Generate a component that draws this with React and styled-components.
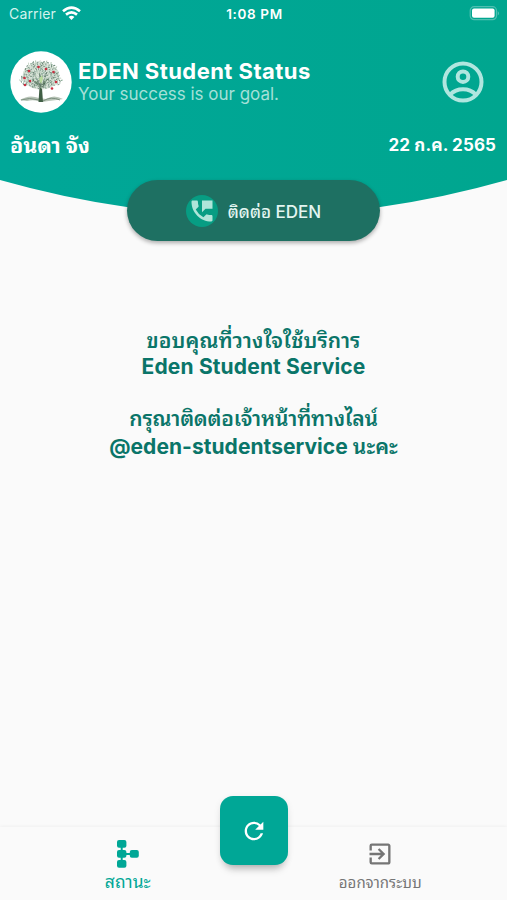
import React from 'react';
import styled, { createGlobalStyle } from 'styled-components';
import { MdPermPhoneMsg, MdRefresh, MdExitToApp } from 'react-icons/md';

const fontStack = 'Inter, "Noto Sans Thai Looped", "Noto Looped Thai", Loma, Waree, Garuda, Umpush, "Noto Sans", sans-serif';

const GlobalStyle = createGlobalStyle`
  * { box-sizing: border-box; }
  body { margin: 0; background: #fafafa; font-family: ${fontStack}; }
  svg { display: block; flex: none; }
`;

const Screen = styled.main`
  display: flex;
  flex-direction: column;
  width: 507px;
  height: 900px;
  overflow: hidden;
  background: #fafafa;
`;

const Header = styled.header`
  height: 216px;
  flex: none;
  color: #fff;
  background: linear-gradient(90deg, #00a798, #00a68f);
  clip-path: path('M0 0H507V180Q253.5 252 0 180Z');
`;

const StatusBar = styled.div`
  display: grid;
  grid-template-columns: 1fr auto 1fr;
  align-items: center;
  height: 27px;
  padding: 0 7px 0 9px;
  font-size: 13px;
  line-height: 16px;
`;

const Carrier = styled.div`
  display: flex;
  align-items: center;
  gap: 6px;
  font-size: 14px;
  letter-spacing: 0.15px;
  color: #d3f3ee;
`;

const Clock = styled.div`
  font-size: 13.5px;
  font-weight: 600;
  letter-spacing: 0.65px;
`;

const BatterySlot = styled.div`
  display: flex;
  justify-content: flex-end;
`;

const BrandRow = styled.div`
  display: flex;
  align-items: center;
  height: 62px;
  margin-top: 23px;
  padding: 1px 23px 0 10px;
  gap: 6px;
`;

const BrandText = styled.div`
  flex: 1;
  padding-top: 1px;
`;

const Title = styled.h1`
  margin: 0;
  font-size: 22px;
  line-height: 23px;
  font-weight: 700;
  letter-spacing: 0.45px;
  white-space: nowrap;
`;

const Tagline = styled.p`
  margin: 0;
  font-size: 17px;
  line-height: 22px;
  letter-spacing: -0.02px;
  color: #a5e0d8;
`;

const InfoRow = styled.div`
  display: flex;
  align-items: center;
  justify-content: space-between;
  height: 40px;
  margin-top: 11px;
  padding: 0 11px 0 10px;
`;

const StudentName = styled.div`
  font-size: 21.5px;
  font-weight: 700;
`;

const DateText = styled.div`
  font-size: 17px;
  font-weight: 700;
  letter-spacing: 0.1px;
`;

const ContactButton = styled.button`
  display: flex;
  align-items: center;
  justify-content: center;
  gap: 10px;
  align-self: center;
  flex: none;
  position: relative;
  width: 253px;
  height: 61px;
  margin: -36px 0 0;
  padding: 0;
  border: 0;
  border-radius: 31px;
  background: #1e7062;
  box-shadow: 0 2px 4px rgba(0, 0, 0, 0.32);
  color: #e3f5f1;
  font: 500 17px/24px ${fontStack};
`;

const ContactLabel = styled.span`
  padding-top: 2px;
`;

const PhoneBadge = styled.span`
  display: grid;
  place-items: center;
  width: 32px;
  height: 32px;
  border-radius: 50%;
  background: #079d83;
  color: #afe5d9;
`;

const Message = styled.section`
  flex: 1;
  padding-top: 87px;
  text-align: center;
  color: #0a7569;
`;

const MessageLine = styled.p`
  margin: 0;
  height: ${(p) => p.$height}px;
  font-size: 21px;
  line-height: 26px;
  font-weight: ${(p) => p.$weight || 600};
  letter-spacing: ${(p) => p.$spacing || 0}px;
  white-space: nowrap;
`;

const BottomBar = styled.nav`
  display: grid;
  grid-template-columns: 1fr 1fr;
  flex: none;
  position: relative;
  height: 73px;
  background: #fafafa;
  box-shadow: 0 -1px 3px rgba(0, 0, 0, 0.045);
`;

const Tab = styled.div`
  display: flex;
  flex-direction: column;
  align-items: center;
  padding: ${(p) => (p.$active ? '13px 0 0 2px' : '13px 0 0')};
  gap: ${(p) => (p.$active ? 2 : 3)}px;
  color: ${(p) => (p.$active ? '#00a796' : '#757575')};
  font-size: ${(p) => (p.$active ? 17.5 : 15)}px;
  line-height: 24px;
`;

const RefreshButton = styled.button`
  position: absolute;
  left: 220px;
  top: -31px;
  display: grid;
  place-items: center;
  width: 68px;
  height: 69px;
  padding: 0;
  border: 0;
  border-radius: 13px;
  background: #00a796;
  color: #fff;
  box-shadow: 0 8px 9px -5px rgba(0, 0, 0, 0.28), 0 2px 7px rgba(0, 0, 0, 0.08);
`;

const leaves = Array.from({ length: 230 }, (_, i) => {
  const a = i * 2.39996;
  const r = Math.sqrt((i + 0.5) / 230);
  const wobble = 1 + 0.09 * Math.sin(a * 5);
  return {
    x: 31 + Math.cos(a) * r * 20 * wobble,
    y: 22.5 + Math.sin(a) * r * 14 * wobble + Math.abs(Math.cos(a) * r) * 4,
    turn: (i * 67) % 180,
    tone: ['#8fae9a', '#6b8776', '#b4c9b6', '#849e90', '#cad8ca'][i % 5],
  };
});

const apples = [
  [28.5, 16], [36, 18], [19, 20], [43.5, 21], [14.5, 27], [20, 30], [15, 34], [46, 31], [42, 37.5],
];

const TreeLogo = () => (
  <svg width="62" height="62" viewBox="0 0 62 62">
    <circle cx="31" cy="31" r="30.7" fill="#fff" />
    <ellipse cx="31" cy="25" rx="18.5" ry="13.5" fill="#d3ded1" opacity=".7" />
    <path d="M10 49q9-6 19-2l7 1q8-5 17 0l-6 1q-9 1-15 2-8-3-15-1z" fill="#b8c4b7" />
    <path d="M11 49q8-3 18 0M33 50q8-5 17-1" stroke="#7d9080" strokeWidth="1" fill="none" />
    <path d="M28.5 51l1-15-8-8 8 4V20l2 13 8-7-7.5 11 1 14z" fill="#405e45" />
    <path d="M31 37L18 30M31 35l-8-14M32 36l13-10M32 34l5-13" stroke="#66796b" strokeWidth=".7" />
    {leaves.map((l, i) => (
      <ellipse key={i} cx={l.x} cy={l.y} rx="1.2" ry=".6" fill={l.tone} transform={`rotate(${l.turn} ${l.x} ${l.y})`} />
    ))}
    <path d="M29 28l3-4 1 4-2 5z" fill="#b9db9c" />
    {apples.map(([x, y], i) => <circle key={i} cx={x} cy={y} r="1.3" fill="#c82e40" />)}
  </svg>
);

const WifiIcon = () => (
  <svg width="19" height="15" viewBox="0 0 19 15" fill="none" stroke="#fff" strokeWidth="2.7">
    <path d="M1 5.2Q9.5-1.8 18 5.2M4 8.6Q9.5 4.2 15 8.6" />
    <path d="M6.6 11Q9.5 8.7 12.4 11L9.5 14z" fill="#fff" stroke="none" />
  </svg>
);

const BatteryIcon = () => (
  <svg width="31" height="15" viewBox="0 0 31 15">
    <rect x="1.2" y=".7" width="26.3" height="13" rx="4" fill="none" stroke="#4fbfb1" strokeWidth="1.2" />
    <rect x="3" y="2.6" width="22.6" height="9.2" rx="2" fill="#fff" />
    <path d="M28.8 5q2 2.3 0 4.5z" fill="#69c9be" />
  </svg>
);

const AccountIcon = () => (
  <svg width="42" height="42" viewBox="0 0 42 42" fill="none" stroke="#b0e6df" strokeWidth="4">
    <circle cx="21" cy="21" r="18.5" />
    <circle cx="21" cy="15.7" r="5.3" />
    <path d="M8.2 33.5Q13.2 28.2 21 28.2t12.8 5.3" />
  </svg>
);

const NodesIcon = () => (
  <svg width="22" height="28" viewBox="0 0 22 28" fill="currentColor">
    <path d="M3.7 4h2v20h-2zM5 13h11v2H5z" />
    <rect x="0" y="0" width="9.4" height="7.8" rx="2" />
    <rect x="0" y="10" width="9.4" height="7.8" rx="2" />
    <rect x="0" y="20" width="9.4" height="7.8" rx="2" />
    <rect x="12.8" y="10" width="9" height="7.8" rx="2" />
  </svg>
);

export default function App() {
  return (
    <Screen>
      <GlobalStyle />
      <Header>
        <StatusBar>
          <Carrier>Carrier <WifiIcon /></Carrier>
          <Clock>1:08 PM</Clock>
          <BatterySlot><BatteryIcon /></BatterySlot>
        </StatusBar>
        <BrandRow>
          <TreeLogo />
          <BrandText>
            <Title>EDEN Student Status</Title>
            <Tagline>Your success is our goal.</Tagline>
          </BrandText>
          <AccountIcon />
        </BrandRow>
        <InfoRow>
          <StudentName>อันดา จัง</StudentName>
          <DateText>22 ก.ค. 2565</DateText>
        </InfoRow>
      </Header>
      <ContactButton>
        <PhoneBadge><MdPermPhoneMsg size={28} /></PhoneBadge>
        <ContactLabel>ติดต่อ EDEN</ContactLabel>
      </ContactButton>
      <Message>
        <MessageLine $height={26} $spacing={0.1}>ขอบคุณที่วางใจใช้บริการ</MessageLine>
        <MessageLine $height={52} $weight={650} $spacing={0.15}>Eden Student Service</MessageLine>
        <MessageLine $height={28} $spacing={-0.2}>กรุณาติดต่อเจ้าหน้าที่ทางไลน์</MessageLine>
        <MessageLine $height={26} $weight={650} $spacing={0.05}>@eden-studentservice นะคะ</MessageLine>
      </Message>
      <BottomBar>
        <Tab $active><NodesIcon /><span>สถานะ</span></Tab>
        <Tab><MdExitToApp size={28} /><span>ออกจากระบบ</span></Tab>
        <RefreshButton><MdRefresh size={28} /></RefreshButton>
      </BottomBar>
    </Screen>
  );
}
